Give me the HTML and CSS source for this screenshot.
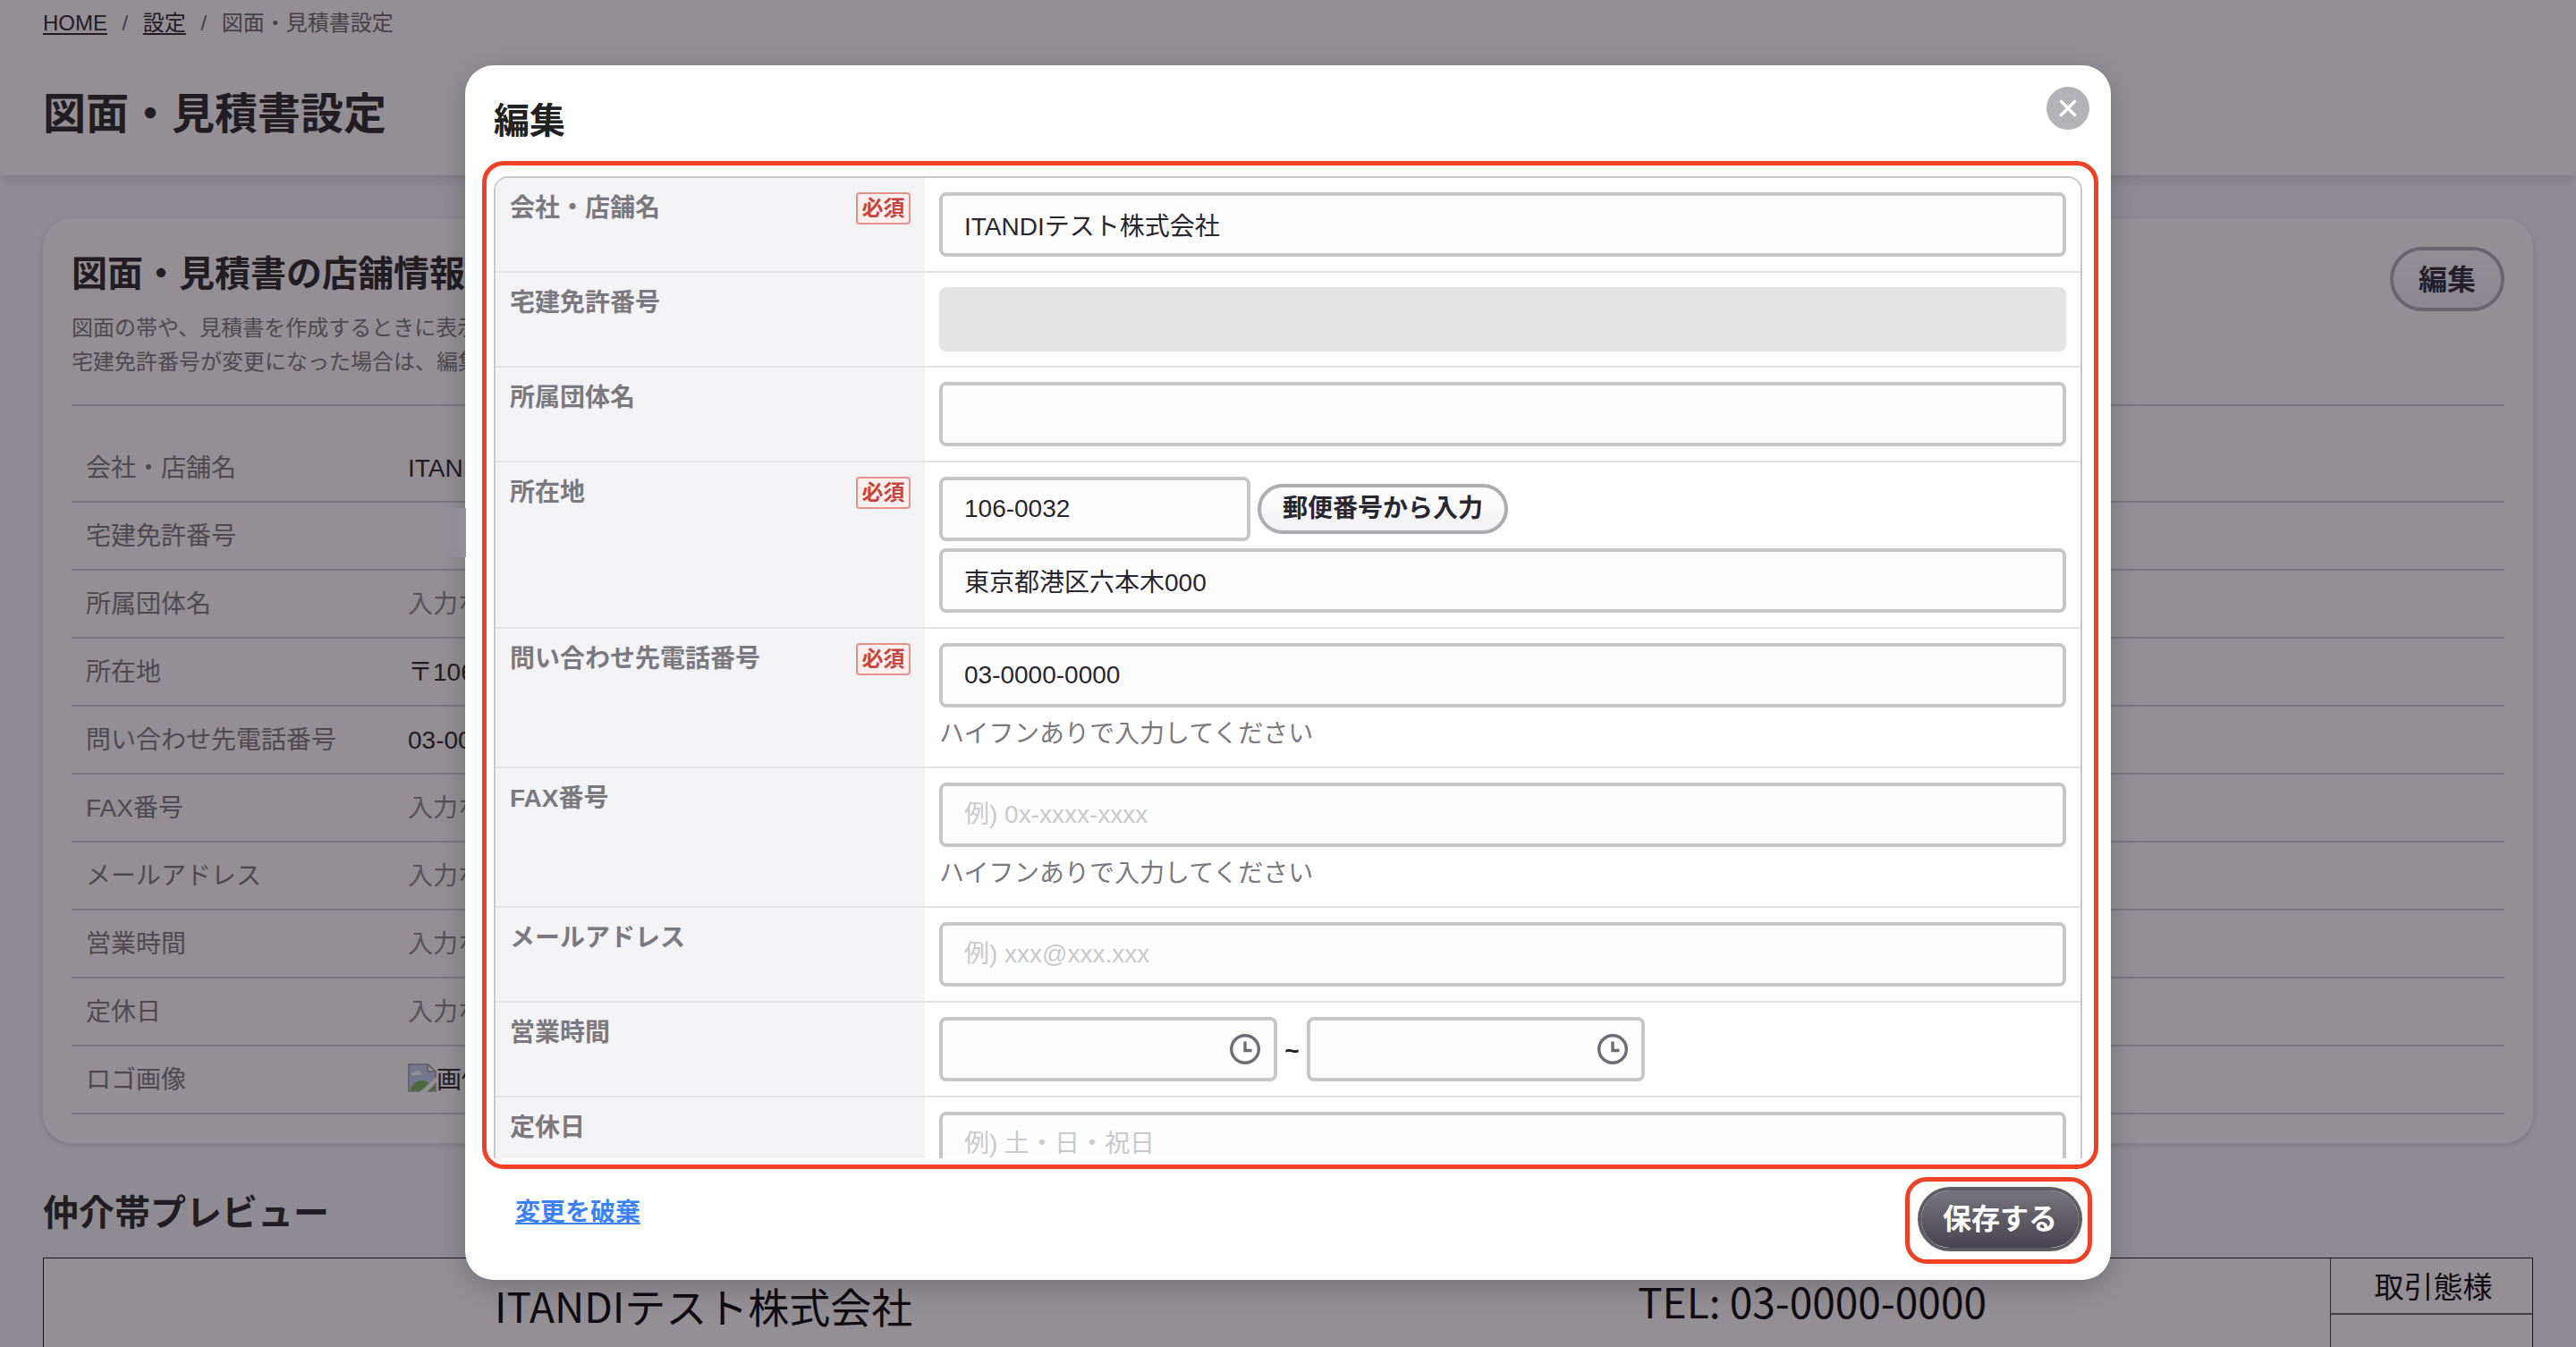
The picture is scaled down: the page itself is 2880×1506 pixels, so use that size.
FILE: index.html
```html
<!DOCTYPE html>
<html lang="ja">
<head>
    <meta charset="UTF-8">
    <meta name="viewport" content="width=device-width, initial-scale=1.0">
    <title>図面・見積書設定</title>
    <link rel="stylesheet" href="styles.css">
</head>
<body>
    <header class="page-header">
        <nav class="breadcrumb">
            <a href="#">HOME</a>
            <span>/</span>
            <a href="#">設定</a>
            <span>/</span>
            <span>図面・見積書設定</span>
        </nav>
        <h1>図面・見積書設定</h1>
    </header>

    <main class="content">
        <section class="card">
            <div class="card-head">
                <div>
                    <h2>図面・見積書の店舗情報</h2>
                    <p>図面の帯や、見積書を作成するときに表示<br>宅建免許番号が変更になった場合は、編集</p>
                </div>
                <button type="button" class="btn btn-edit">編集</button>
            </div>
            <dl class="info">
                <div class="info-row"><dt>会社・店舗名</dt><dd>ITANDI</dd></div>
                <div class="info-row"><dt>宅建免許番号</dt><dd></dd></div>
                <div class="info-row"><dt>所属団体名</dt><dd class="empty">入力なし</dd></div>
                <div class="info-row"><dt>所在地</dt><dd>〒106</dd></div>
                <div class="info-row"><dt>問い合わせ先電話番号</dt><dd>03-0000</dd></div>
                <div class="info-row"><dt>FAX番号</dt><dd class="empty">入力なし</dd></div>
                <div class="info-row"><dt>メールアドレス</dt><dd class="empty">入力なし</dd></div>
                <div class="info-row"><dt>営業時間</dt><dd class="empty">入力なし</dd></div>
                <div class="info-row"><dt>定休日</dt><dd class="empty">入力なし</dd></div>
                <div class="info-row">
                    <dt>ロゴ画像</dt>
                    <dd class="logo">
                        <svg width="32" height="32" viewBox="0 0 32 32">
                            <path d="M1 1H22L31 9V31H1Z" fill="#c0d0f2" stroke="#9a9a9a" stroke-width="1.6"/>
                            <path d="M22 1V9H31Z" fill="#fff" stroke="#9a9a9a" stroke-width="1.6"/>
                            <path d="M4 13a3 3 0 0 1 3-3a4 4 0 0 1 7 0a3 3 0 0 1 2 3Z" fill="#fff"/>
                            <path d="M2 30C7 17 19 16 25 24L18 30Z" fill="#72b552"/>
                            <path d="M23 30H30V23Z" fill="#72b552"/>
                            <path d="M13 32L32 15V21L21 32Z" fill="#fff"/>
                        </svg>
                        画像
                    </dd>
                </div>
            </dl>
        </section>

        <h2 class="preview-title">仲介帯プレビュー</h2>
        <div class="preview">
            <div class="preview-name">ITANDIテスト株式会社</div>
            <div class="preview-tel">TEL: 03-0000-0000</div>
            <div class="preview-type"><div>取引態様</div></div>
        </div>
    </main>

    <div class="overlay">
        <div class="modal">
            <div class="modal-head">
                <h2>編集</h2>
                <button type="button" class="close" aria-label="閉じる">
                    <svg width="48" height="48" viewBox="0 0 48 48">
                        <path d="M15.5 15.5L32.5 32.5M32.5 15.5L15.5 32.5" stroke="#fff" stroke-width="3.2"/>
                    </svg>
                </button>
            </div>

            <div class="form-scroll">
                <form class="form-table">
                    <div class="form-row">
                        <div class="form-label">会社・店舗名<span class="required">必須</span></div>
                        <div class="form-field"><input type="text" value="ITANDIテスト株式会社"></div>
                    </div>
                    <div class="form-row">
                        <div class="form-label">宅建免許番号</div>
                        <div class="form-field"><input type="text" disabled></div>
                    </div>
                    <div class="form-row">
                        <div class="form-label">所属団体名</div>
                        <div class="form-field"><input type="text"></div>
                    </div>
                    <div class="form-row">
                        <div class="form-label">所在地<span class="required">必須</span></div>
                        <div class="form-field">
                            <div class="zip">
                                <input type="text" class="input-zip" value="106-0032">
                                <button type="button" class="btn btn-small">郵便番号から入力</button>
                            </div>
                            <input type="text" value="東京都港区六本木000">
                        </div>
                    </div>
                    <div class="form-row">
                        <div class="form-label">問い合わせ先電話番号<span class="required">必須</span></div>
                        <div class="form-field">
                            <input type="text" value="03-0000-0000">
                            <p class="hint">ハイフンありで入力してください</p>
                        </div>
                    </div>
                    <div class="form-row">
                        <div class="form-label">FAX番号</div>
                        <div class="form-field">
                            <input type="text" placeholder="例) 0x-xxxx-xxxx">
                            <p class="hint">ハイフンありで入力してください</p>
                        </div>
                    </div>
                    <div class="form-row">
                        <div class="form-label">メールアドレス</div>
                        <div class="form-field"><input type="text" placeholder="例) xxx@xxx.xxx"></div>
                    </div>
                    <div class="form-row">
                        <div class="form-label">営業時間</div>
                        <div class="form-field hours">
                            <div class="time">
                                <svg width="36" height="36" viewBox="0 0 36 36">
                                    <circle cx="18" cy="18" r="15.3"/>
                                    <path d="M18 9.5V19.5H25.5"/>
                                </svg>
                            </div>
                            <span class="tilde">~</span>
                            <div class="time">
                                <svg width="36" height="36" viewBox="0 0 36 36">
                                    <circle cx="18" cy="18" r="15.3"/>
                                    <path d="M18 9.5V19.5H25.5"/>
                                </svg>
                            </div>
                        </div>
                    </div>
                    <div class="form-row">
                        <div class="form-label">定休日</div>
                        <div class="form-field"><input type="text" placeholder="例) 土・日・祝日"></div>
                    </div>
                </form>
            </div>

            <div class="modal-foot">
                <a href="#" class="discard">変更を破棄</a>
                <button type="button" class="btn btn-save">保存する</button>
            </div>

            <div class="mark mark-form"></div>
            <div class="mark mark-save"></div>
            <div class="mask"></div>
        </div>
    </div>
</body>
</html>
```
FILE: styles.css
```css
* {
    box-sizing: border-box;
    margin: 0;
    padding: 0;
}

body {
    height: 1506px;
    overflow: hidden;
    background: #f7f7f9;
    color: #222;
    font-family: "Liberation Sans", "Noto Sans CJK JP", sans-serif;
    font-size: 28px;
    line-height: 42px;
}

button, input {
    font-family: inherit;
}

/* page */
.page-header {
    height: 196px;
    padding: 8px 48px 0;
    background: #fff;
    box-shadow: 0 4px 12px rgba(0, 0, 0, 0.14);
}

.breadcrumb {
    display: flex;
    gap: 16.6px;
    font-size: 24px;
    line-height: 36px;
    color: #666;
}

.breadcrumb a {
    color: #222;
    text-underline-offset: 3px;
    text-decoration-thickness: 2px;
}

h1 {
    margin-top: 48px;
    font-size: 48px;
    line-height: 72px;
}

.content {
    padding: 48px 48px 0;
}

.card {
    height: 1034px;
    padding: 32px 32px 0;
    border-radius: 32px;
    background: #fff;
    box-shadow: 0 2px 6px rgba(0, 0, 0, 0.16);
}

.card-head {
    display: flex;
    justify-content: space-between;
    align-items: flex-start;
    height: 178px;
    border-bottom: 2px solid #cfced2;
}

.card-head h2 {
    font-size: 40px;
    line-height: 60px;
}

.card-head p {
    margin-top: 12px;
    font-size: 24px;
    line-height: 38px;
    color: #777;
}

.info {
    padding-top: 32px;
}

.info-row {
    display: flex;
    align-items: center;
    height: 76px;
    padding: 2px 0 0 16px;
    border-bottom: 2px solid #cfced2;
}

.info-row dt {
    width: 360px;
    color: #777;
}

.info-row .empty {
    color: #888;
}

.logo {
    display: flex;
    align-items: center;
}

.logo svg {
    margin-bottom: 6px;
}

.preview-title {
    margin-top: 48px;
    font-size: 40px;
    line-height: 60px;
}

.preview {
    display: flex;
    height: 160px;
    margin-top: 20px;
    border: 1px solid #111;
    background: #fff;
    color: #000;
    font-family: "Noto Sans CJK JP", sans-serif;
    font-size: 46px;
    line-height: 60px;
}

.preview-name {
    width: 1281px;
    padding: 22px 0 0 504px;
    white-space: nowrap;
}

.preview-tel {
    flex: 1;
    padding: 17px 0 0 501px;
}

.preview-type {
    width: 226px;
    border-left: 1px solid #333;
    text-align: center;
    font-size: 33px;
    line-height: 60px;
}

.preview-type div {
    height: 63px;
    padding-left: 4px;
    border-bottom: 2px solid #666;
}

/* buttons */
.btn {
    border: 4px solid #adacb1;
    border-radius: 36px;
    background: linear-gradient(#fff, #f1f1f3);
    color: #282631;
    font-weight: bold;
}

.btn-edit {
    width: 128px;
    height: 72px;
    padding-bottom: 5px;
    font-size: 32px;
}

.btn-small {
    width: 280px;
    height: 56px;
    font-size: 28px;
    line-height: 40px;
}

.btn-save {
    width: 184px;
    height: 72px;
    padding-bottom: 6px;
    border-color: #5f5d64;
    background: linear-gradient(#77757c, #484450) padding-box;
    color: #fff;
    font-size: 32px;
}

/* modal */
.overlay {
    position: absolute;
    inset: 0;
    background: rgba(32, 24, 38, 0.485);
}

.modal {
    position: relative;
    width: 1840px;
    height: 1358px;
    margin: 73px auto 0;
    padding: 24px 24px 0 32px;
    border-radius: 32px;
    background: #fff;
    box-shadow: 0 8px 32px rgba(0, 0, 0, 0.2);
}

.modal-head {
    display: flex;
    justify-content: space-between;
    height: 100px;
}

.modal-head h2 {
    padding-top: 8px;
    font-size: 40px;
    line-height: 60px;
}

.close {
    width: 48px;
    height: 48px;
    border: none;
    border-radius: 50%;
    background: #b3b2b7;
}

.close svg {
    display: block;
}

.form-scroll {
    width: 1776px;
    height: 1098px;
    overflow: hidden;
}

.form-table {
    border: 2px solid #c8c8ca;
    border-radius: 16px;
    overflow: hidden;
}

.form-row {
    display: flex;
    border-bottom: 2px solid #e3e3e4;
}

.form-label {
    display: flex;
    justify-content: space-between;
    align-items: flex-start;
    width: 480px;
    padding: 16px;
    background: #f3f3f5;
    color: #7b7980;
    font-weight: bold;
    line-height: 36px;
}

.required {
    width: 61px;
    height: 36px;
    border: 2px solid #e6918c;
    border-radius: 4px;
    background: #fdefed;
    color: #c6453c;
    font-size: 24px;
    line-height: 31px;
    text-align: center;
}

.form-field {
    flex: 1;
    padding: 16px;
    background: #fff;
}

.form-field input, .time {
    display: block;
    width: 100%;
    height: 72px;
    padding: 0 24px;
    border: 4px solid #c7c7c9;
    border-radius: 8px;
    background: #fdfdfe;
    color: #282631;
    font-size: 28px;
}

.form-field input::placeholder {
    color: #c9c9cc;
}

.form-field input:disabled {
    border-color: #e3e3e3;
    background: #e3e3e3;
}

.zip {
    display: flex;
    align-items: center;
    gap: 8px;
    margin-bottom: 8px;
}

.form-field .input-zip {
    width: 348px;
}

.hint {
    height: 41px;
    margin-top: 9px;
    color: #7b7980;
}

.hours {
    display: flex;
    align-items: center;
}

.time {
    display: flex;
    align-items: center;
    justify-content: flex-end;
    width: 378px;
    padding: 0 14px;
}

.time svg {
    fill: none;
    stroke: #6d6b74;
    stroke-width: 3.4;
}

.tilde {
    width: 33px;
    padding-top: 3px;
    text-align: center;
    font-weight: bold;
}

.modal-foot {
    display: flex;
    justify-content: space-between;
    align-items: flex-start;
    padding: 32px 8px 0 24px;
}

.discard {
    color: #3b82f6;
    font-weight: bold;
    line-height: 58px;
    text-underline-offset: 2px;
    text-decoration-thickness: 2px;
}

/* highlight frames */
.mark {
    position: absolute;
    border: 5px solid #ee4126;
    border-radius: 24px;
}

.mark-form {
    left: 19px;
    top: 107px;
    width: 1807px;
    height: 1127px;
}

.mark-save {
    left: 1610px;
    top: 1243px;
    width: 209px;
    height: 97px;
}

.mask {
    position: absolute;
    left: -32px;
    top: 495px;
    width: 33px;
    height: 55px;
    background: linear-gradient(to right, rgba(147, 143, 150, 0), #938f96);
}
```
